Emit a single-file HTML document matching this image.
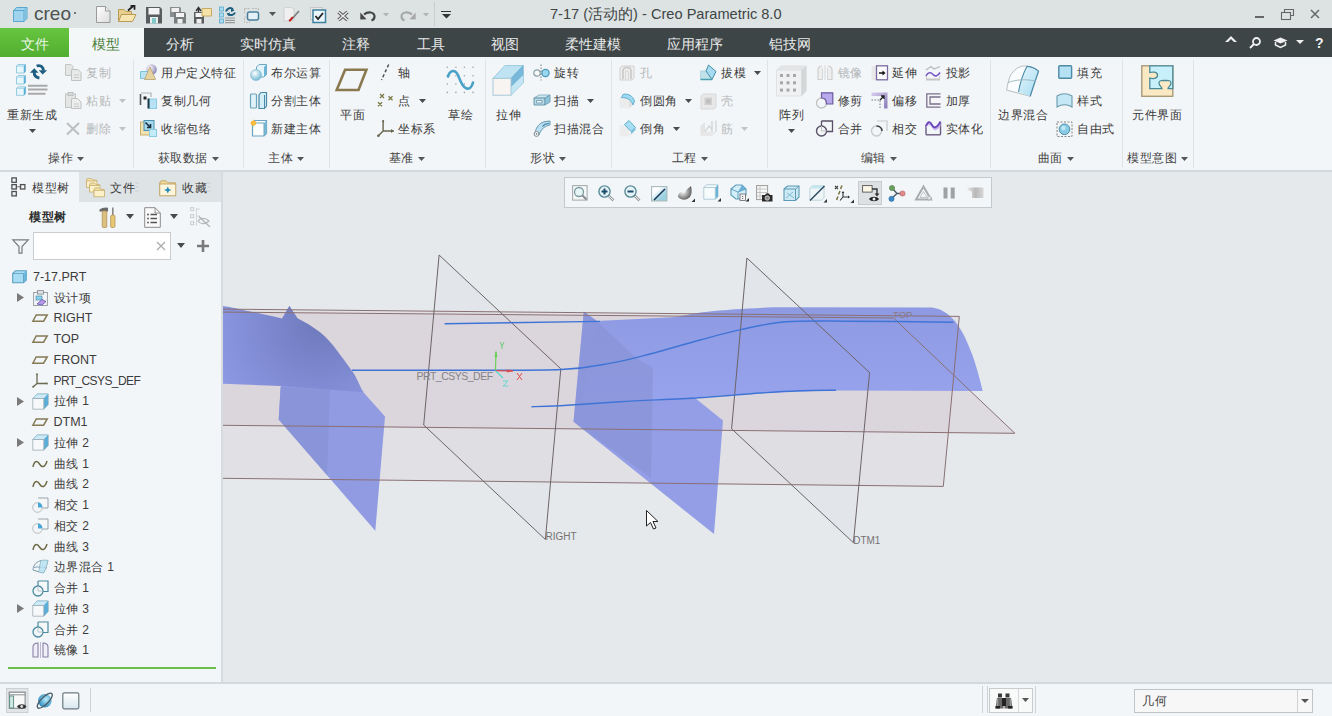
<!DOCTYPE html>
<html><head><meta charset="utf-8"><style>
html,body{margin:0;padding:0;width:1332px;height:716px;overflow:hidden;background:#f3f6f8;}
body{position:relative;font-family:"Liberation Sans", sans-serif;}
.t{position:absolute;white-space:nowrap;}
svg{overflow:visible}
</style></head><body>
<div style="position:absolute;left:0px;top:0px;width:1332px;height:28px;background:#dde3e3"></div>
<svg style="position:absolute;left:12px;top:6px;" width="17" height="17" viewBox="0 0 17 17"><path d="M1.5 4.5 L4.5 1.5 H15 V12.5 L12 15.5 H1.5Z" fill="#9fd4ee" stroke="#5aa6cc" stroke-width="1"/><path d="M1.5 4.5H12V15.5M12 4.5L15 1.5" fill="none" stroke="#5aa6cc" stroke-width="1"/><path d="M12 4.5 L15 1.5 V12.5 L12 15.5Z" fill="#7fc0e0"/></svg>
<div class="t" style="left:34px;top:0.50px;line-height:25px;font-size:19px;color:#4d5252;font-weight:normal;">creo</div>
<div style="position:absolute;left:74px;top:12px;width:2px;height:2px;background:#4d5252;border-radius:1px"></div>
<div class="t" style="left:550px;top:3.70px;line-height:20.6px;font-size:14.6px;color:#404545;font-weight:normal;">7-17 (活动的) - Creo Parametric 8.0</div>
<svg style="position:absolute;left:96px;top:6px;" width="15" height="17" viewBox="0 0 15 17"><defs><linearGradient id="pg" x1="0" y1="0" x2="1" y2="1"><stop offset="0" stop-color="#ffffff"/><stop offset="1" stop-color="#dcdcdc"/></linearGradient></defs><path d="M0.5 0.5H9.5L14 5V16.5H0.5Z" fill="url(#pg)" stroke="#9a9a9a"/><path d="M9.5 0.5V5H14" fill="#eee" stroke="#9a9a9a"/></svg>
<svg style="position:absolute;left:118px;top:5px;" width="19" height="18" viewBox="0 0 19 18"><path d="M0.5 4.5H6L8 6.5H13.5V16.5H0.5Z" fill="#e8cf8e" stroke="#b99a55"/><path d="M0.5 16.5L3.5 9.5H18L14.5 16.5Z" fill="#f8e6b0" stroke="#b99a55"/><path d="M10 5.5L15.5 0.8M12.5 0.8H16.5V4.8" fill="none" stroke="#222" stroke-width="1.8"/></svg>
<svg style="position:absolute;left:145.5px;top:6.5px;" width="16" height="16.5" viewBox="0 0 16 16.5"><path d="M0 0H14L16 2V16.5H0Z" fill="#5a5d60"/><rect x="2.5" y="1" width="11" height="6.5" fill="#f4f4f4"/><rect x="4" y="10" width="8" height="6.5" fill="#e8eeee"/><rect x="6" y="11" width="4" height="5.5" fill="#7fc8c8"/></svg>
<svg style="position:absolute;left:170px;top:6.5px;" width="16" height="16.5" viewBox="0 0 16 16.5"><path d="M0 0H10L11 1V10H0Z" fill="#8a8d90"/><rect x="1.5" y="1" width="7.5" height="4" fill="#f0f0f0"/><path d="M4 5H14.5L16 6.5V16.5H4Z" fill="#7a7d80"/><rect x="6" y="6" width="8" height="4" fill="#f4f4f4"/><rect x="7.5" y="12" width="5" height="4.5" fill="#eef0f0"/></svg>
<svg style="position:absolute;left:193.5px;top:5.5px;" width="18" height="17.5" viewBox="0 0 18 17.5"><path d="M0 6H9L10 7V17.5H0Z" fill="#5a5d60"/><rect x="1.5" y="7" width="7" height="4" fill="#f4f4f4"/><rect x="2.5" y="13" width="5" height="4.5" fill="#eef0f0"/><path d="M8 2.5H17.5V10H8Z" fill="#f6e3a8" stroke="#c6aa66"/><path d="M2 5L4.5 1.5L7 5M4.5 1.5V6" fill="none" stroke="#333" stroke-width="1.4"/></svg>
<svg style="position:absolute;left:219px;top:5.5px;" width="17" height="17.5" viewBox="0 0 17 17.5"><rect x="0.5" y="1" width="4" height="4" fill="#a8dcf0" stroke="#5aa8cc" stroke-width="0.8"/><rect x="0.5" y="7" width="4" height="4" fill="#a8dcf0" stroke="#5aa8cc" stroke-width="0.8"/><rect x="0.5" y="13" width="4" height="4" fill="#a8dcf0" stroke="#5aa8cc" stroke-width="0.8"/><path d="M7 5.5C8 2 12 1 14 3.5M16 6.5C15 9 11 10 9 8" fill="none" stroke="#1f5f80" stroke-width="2"/><path d="M12 1.5L15.5 4.5L12 6Z M11 6.5L7.5 7.5L10 10Z" fill="#1f5f80"/><path d="M6 12H16M6 14.3H16M6 16.6H16" stroke="#9a9a9a" stroke-width="1.2"/></svg>
<svg style="position:absolute;left:244px;top:8px;" width="16" height="15" viewBox="0 0 16 15"><path d="M0.5 0.5H6M8 0.5H14.5M0.5 0.5V5M14.5 0.5V3" fill="none" stroke="#b8b8b8" stroke-width="1" stroke-dasharray="2 1"/><rect x="0.5" y="9" width="5" height="5.5" fill="none" stroke="#c0c0c0" stroke-dasharray="2 1"/><rect x="3.5" y="4" width="11" height="8" rx="2" fill="#e4f2f8" stroke="#4a7f9a" stroke-width="1.5"/></svg>
<svg style="position:absolute;left:268.7px;top:11.8px;" width="7" height="4" viewBox="0 0 7 4"><path d="M0 0H7L3.5 4Z" fill="#555"/></svg>
<svg style="position:absolute;left:283px;top:6.5px;" width="18" height="16.5" viewBox="0 0 18 16.5"><path d="M1 1C4 0 9 0 11 2V14C8 13 3 13 1 15Z" fill="#f0f0f0" stroke="#d0d0d0"/><path d="M16 4L8 13" stroke="#777" stroke-width="1.5"/><path d="M10.5 10.5L7 15L5.5 13.5L9 9.5Z" fill="#c82020"/></svg>
<svg style="position:absolute;left:310px;top:7px;" width="16" height="16" viewBox="0 0 16 16"><rect x="0.5" y="0.5" width="12" height="12" fill="#e8e8e8" stroke="#c8c8c8"/><rect x="3" y="3" width="12.5" height="12.5" fill="#eaf6fb" stroke="#3f7f9f" stroke-width="1.5"/><path d="M5.5 9L8 12L13 6" fill="none" stroke="#222" stroke-width="1.8"/></svg>
<svg style="position:absolute;left:336.5px;top:10.5px;" width="12" height="10" viewBox="0 0 12 10"><path d="M1.5 1L10.5 9M10.5 1L1.5 9" stroke="#555" stroke-width="3.4"/><path d="M1.5 1L10.5 9M10.5 1L1.5 9" stroke="#f2f2f2" stroke-width="1.4"/></svg>
<svg style="position:absolute;left:359.5px;top:10px;" width="16" height="11" viewBox="0 0 16 11"><path d="M4 4.5C8 1 14.5 2 14.5 6.5C14.5 8.5 13 10 11.5 10.5" fill="none" stroke="#454545" stroke-width="2.2"/><path d="M0.3 2.5L0.3 9.5L6.5 9.3Z" fill="#454545"/></svg>
<svg style="position:absolute;left:383.4px;top:12.65px;" width="6" height="3.5" viewBox="0 0 6 3.5"><path d="M0 0H6L3.0 3.5Z" fill="#b0b4b4"/></svg>
<svg style="position:absolute;left:399.5px;top:10px;" width="16" height="11" viewBox="0 0 16 11"><path d="M12 4.5C8 1 1.5 2 1.5 6.5C1.5 8.5 3 10 4.5 10.5" fill="none" stroke="#a8a8a8" stroke-width="2.2"/><path d="M15.7 2.5L15.7 9.5L9.5 9.3Z" fill="#a8a8a8"/></svg>
<svg style="position:absolute;left:423.0px;top:12.65px;" width="6" height="3.5" viewBox="0 0 6 3.5"><path d="M0 0H6L3.0 3.5Z" fill="#b0b4b4"/></svg>
<div style="position:absolute;left:433.5px;top:2px;width:1px;height:24px;background:#c8cccc"></div>
<div style="position:absolute;left:441px;top:10.5px;width:10px;height:1.3px;background:#333"></div>
<svg style="position:absolute;left:441.5px;top:13.5px;" width="9" height="4.6" viewBox="0 0 9 4.6"><path d="M0 0H9L4.5 4.6Z" fill="#333"/></svg>
<div style="position:absolute;left:1255px;top:16px;width:9px;height:2px;background:#666"></div>
<svg style="position:absolute;left:1281px;top:9px;" width="13" height="11" viewBox="0 0 13 11"><path d="M3.5 3.5V0.5H12.5V6.5H9.5" fill="none" stroke="#666" stroke-width="1.1"/><rect x="0.5" y="3.5" width="9" height="7" fill="none" stroke="#666" stroke-width="1.1"/></svg>
<svg style="position:absolute;left:1310px;top:9px;" width="10" height="10" viewBox="0 0 10 10"><path d="M1 1L9 9M9 1L1 9" stroke="#666" stroke-width="1.5"/></svg>
<div style="position:absolute;left:0px;top:28px;width:1332px;height:29px;background:#3e4547"></div>
<div style="position:absolute;left:0px;top:28px;width:69px;height:29px;background:linear-gradient(#66c540,#52ae30)"></div>
<div style="position:absolute;left:69px;top:28px;width:75px;height:29px;background:#f4f7f8"></div>
<div class="t" style="left:21px;top:33.50px;line-height:20px;font-size:14px;color:#ecf7e6;font-weight:normal;">文件</div>
<div class="t" style="left:92px;top:33.50px;line-height:20px;font-size:14px;color:#4a7d3a;font-weight:normal;">模型</div>
<div class="t" style="left:166px;top:33.50px;line-height:20px;font-size:14px;color:#e8eaea;font-weight:normal;">分析</div>
<div class="t" style="left:240px;top:33.50px;line-height:20px;font-size:14px;color:#e8eaea;font-weight:normal;">实时仿真</div>
<div class="t" style="left:342px;top:33.50px;line-height:20px;font-size:14px;color:#e8eaea;font-weight:normal;">注释</div>
<div class="t" style="left:417px;top:33.50px;line-height:20px;font-size:14px;color:#e8eaea;font-weight:normal;">工具</div>
<div class="t" style="left:491px;top:33.50px;line-height:20px;font-size:14px;color:#e8eaea;font-weight:normal;">视图</div>
<div class="t" style="left:565px;top:33.50px;line-height:20px;font-size:14px;color:#e8eaea;font-weight:normal;">柔性建模</div>
<div class="t" style="left:667px;top:33.50px;line-height:20px;font-size:14px;color:#e8eaea;font-weight:normal;">应用程序</div>
<div class="t" style="left:769px;top:33.50px;line-height:20px;font-size:14px;color:#e8eaea;font-weight:normal;">铝技网</div>
<svg style="position:absolute;left:1225px;top:36px;" width="12" height="7" viewBox="0 0 12 7"><path d="M0 6L6 0L12 6L9 6L6 3L3 6Z" fill="#f0f0f0"/></svg>
<svg style="position:absolute;left:1249px;top:37px;" width="13" height="11" viewBox="0 0 13 11"><circle cx="7.5" cy="4.5" r="3.5" fill="none" stroke="#f0f0f0" stroke-width="1.8"/><path d="M5 7L1 11" stroke="#f0f0f0" stroke-width="2"/></svg>
<svg style="position:absolute;left:1273px;top:37px;" width="15" height="11" viewBox="0 0 15 11"><path d="M0.5 3.5L7.5 0.5L14.5 3.5L7.5 6.5Z" fill="#f0f0f0"/><path d="M2.5 5V8L7.5 10.5L12.5 8V5" fill="none" stroke="#f0f0f0" stroke-width="1.5"/></svg>
<svg style="position:absolute;left:1295.5px;top:40.0px;" width="8" height="4" viewBox="0 0 8 4"><path d="M0 0H8L4.0 4Z" fill="#f0f0f0"/></svg>
<div class="t" style="left:1315px;top:33.00px;line-height:20px;font-size:14px;color:#f0f0f0;font-weight:bold;">?</div>
<div style="position:absolute;left:0px;top:57px;width:1332px;height:113px;background:#f3f6f8"></div>
<div style="position:absolute;left:0px;top:170px;width:1332px;height:2px;background:#d3d9dc"></div>
<div style="position:absolute;left:133px;top:60px;width:1px;height:108px;background:#dfe3e6"></div>
<div style="position:absolute;left:243px;top:60px;width:1px;height:108px;background:#dfe3e6"></div>
<div style="position:absolute;left:329px;top:60px;width:1px;height:108px;background:#dfe3e6"></div>
<div style="position:absolute;left:485px;top:60px;width:1px;height:108px;background:#dfe3e6"></div>
<div style="position:absolute;left:611px;top:60px;width:1px;height:108px;background:#dfe3e6"></div>
<div style="position:absolute;left:767px;top:60px;width:1px;height:108px;background:#dfe3e6"></div>
<div style="position:absolute;left:990px;top:60px;width:1px;height:108px;background:#dfe3e6"></div>
<div style="position:absolute;left:1122px;top:60px;width:1px;height:108px;background:#dfe3e6"></div>
<div style="position:absolute;left:1193px;top:60px;width:1px;height:108px;background:#dfe3e6"></div>
<svg style="position:absolute;left:16px;top:64px;" width="32" height="32" viewBox="0 0 32 32"><path d="M0.5 2 L2 0.5 H9.5 V7.5 L8 9 H0.5Z" fill="#e8f7fc" stroke="#8cc6de" stroke-width="0.9"/><path d="M8 2H0.5M8 2V9M8 2L9.5 0.5" stroke="#8cc6de" stroke-width="0.8" fill="none"/><path d="M8 2L9.5 0.5V7.5L8 9Z" fill="#5ab0d8"/><path d="M0.5 13 L2 11.5 H9.5 V18.5 L8 20 H0.5Z" fill="#e8f7fc" stroke="#8cc6de" stroke-width="0.9"/><path d="M8 13H0.5M8 13V20M8 13L9.5 11.5" stroke="#8cc6de" stroke-width="0.8" fill="none"/><path d="M8 13L9.5 11.5V18.5L8 20Z" fill="#5ab0d8"/><path d="M0.5 24.3 L2 22.8 H9.5 V29.8 L8 31.3 H0.5Z" fill="#e8f7fc" stroke="#8cc6de" stroke-width="0.9"/><path d="M8 24.3H0.5M8 24.3V31.3M8 24.3L9.5 22.8" stroke="#8cc6de" stroke-width="0.8" fill="none"/><path d="M8 24.3L9.5 22.8V29.8L8 31.3Z" fill="#5ab0d8"/><path d="M20.6 2C23 1 27 1.5 27.5 6.5" fill="none" stroke="#1c5d80" stroke-width="2.8"/><path d="M22.8 6.3H31.2L26.6 10.5Z" fill="#1c5d80"/><path d="M18.2 8C18 11.5 20 13.5 23.4 14" fill="none" stroke="#1c5d80" stroke-width="2.8"/><path d="M18.3 4.3L13.9 8.8H22.5Z" fill="#1c5d80"/><path d="M12 21.7H31.5M12 25.6H31.5M12 29.8H29.5" stroke="#a9a9a9" stroke-width="2"/></svg>
<svg style="position:absolute;left:65px;top:64px;" width="17" height="17" viewBox="0 0 17 17"><path d="M0.5 0.5H6L8 2.5V11.5H0.5Z" fill="#e4e6e6" stroke="#c4c6c6"/><path d="M6.5 5.5H13L16 8.5V16.5H6.5Z" fill="#e8eaea" stroke="#c0c2c2"/><path d="M9 11H14M9 13.5H14" stroke="#c8c8c8"/></svg>
<svg style="position:absolute;left:65px;top:92px;" width="17" height="17" viewBox="0 0 17 17"><rect x="0.5" y="2" width="10" height="13.5" fill="#e4e6e6" stroke="#c4c6c6"/><rect x="3" y="0.5" width="5" height="3" fill="#d8dada" stroke="#c0c2c2"/><path d="M6.5 6.5H12.5L16 10V16.5H6.5Z" fill="#eceeee" stroke="#c0c2c2"/><path d="M9 12H14M9 14.5H14" stroke="#c8c8c8"/></svg>
<svg style="position:absolute;left:66px;top:121.5px;" width="14" height="13.5" viewBox="0 0 14 13.5"><path d="M1 1L13 12.5M13 1L1 12.5" stroke="#bcbfbf" stroke-width="2"/></svg>
<svg style="position:absolute;left:140px;top:64px;" width="17" height="17" viewBox="0 0 17 17"><defs><radialGradient id="sph1" cx="0.35" cy="0.35" r="0.7"><stop offset="0" stop-color="#ffffff"/><stop offset="1" stop-color="#8a84b8"/></radialGradient></defs><circle cx="11.5" cy="5.5" r="5.3" fill="url(#sph1)"/><path d="M0.5 7.5H8V14.5H0.5Z" fill="#b8e4f4" stroke="#7cc0dc"/><path d="M10 3L15.5 15.5H4.5Z" fill="#e6d4a0" stroke="#b8a070" stroke-width="0.8"/></svg>
<svg style="position:absolute;left:140px;top:92px;" width="17" height="17" viewBox="0 0 17 17"><path d="M0.5 2V13" stroke="#5a5a5a" stroke-width="1.6"/><path d="M1 1H11V5" fill="none" stroke="#b0b0b0" stroke-width="1.2"/><rect x="3.5" y="4.5" width="3" height="3" fill="#222"/><rect x="9" y="7" width="7.5" height="9.5" fill="#b8e2f4" stroke="#8ccae4"/><path d="M8.5 6.5V16.5" stroke="#1a3a4a" stroke-width="2"/></svg>
<svg style="position:absolute;left:140px;top:120px;" width="17" height="17" viewBox="0 0 17 17"><rect x="0.5" y="2" width="12" height="13" fill="#f2e2b0" stroke="#c8b070"/><rect x="4" y="0.5" width="10" height="10" fill="#a8d8ec" stroke="#4a90b0"/><path d="M5.5 2.5L10.5 7.5M10.5 4V7.5H7" stroke="#1a3040" stroke-width="1.6" fill="none"/><rect x="9.5" y="9.5" width="7" height="7" fill="#c4ecf8" stroke="#8ccae4"/></svg>
<svg style="position:absolute;left:250px;top:64px;" width="17" height="17" viewBox="0 0 17 17"><defs><radialGradient id="sph2" cx="0.4" cy="0.35" r="0.7"><stop offset="0" stop-color="#ffffff"/><stop offset="1" stop-color="#6ab4d0"/></radialGradient></defs><path d="M6.5 3L9 0.5H16.5V10.5L14 13H6.5Z" fill="#e4f4fa" stroke="#6aa8c4"/><path d="M14 3L16.5 0.5V10.5L14 13Z" fill="#6ab4d4"/><circle cx="6" cy="11" r="5.5" fill="url(#sph2)" stroke="#7ab8d0" stroke-width="0.6"/></svg>
<svg style="position:absolute;left:250px;top:92px;" width="17" height="17" viewBox="0 0 17 17"><rect x="0.5" y="2" width="6" height="14" rx="1" fill="#e0f2fa" stroke="#6aa4bc" stroke-width="1.2"/><path d="M9 3L11 0.5H16.5V14L14.5 16.5H9Z" fill="#d4eef8" stroke="#4a88a8" stroke-width="1.2"/><path d="M14.5 3V16.5" stroke="#4a88a8"/></svg>
<svg style="position:absolute;left:250px;top:120px;" width="17" height="17" viewBox="0 0 17 17"><path d="M2.5 3L5 0.5H16.5V13.5L14 16H2.5Z" fill="#fbfdfe" stroke="#6aa4c0" stroke-width="1.2"/><path d="M14 3L16.5 0.5V13.5L14 16Z" fill="#7abcd8"/><path d="M2.5 3H14V16" fill="none" stroke="#6aa4c0"/><circle cx="3.5" cy="3" r="2.6" fill="#f8b030"/><path d="M3.5 -0.5V6.5M0 3H7" stroke="#f8c850" stroke-width="0.8"/></svg>
<svg style="position:absolute;left:335px;top:68px;" width="33" height="24" viewBox="0 0 33 24"><path d="M10.1 1.8H31.4L23.5 22H1.7Z" fill="none" stroke="#8a7850" stroke-width="2.6" stroke-linejoin="miter"/></svg>
<svg style="position:absolute;left:380px;top:64px;" width="10" height="17" viewBox="0 0 10 17"><path d="M8.7 0.5L1.5 16" stroke="#505050" stroke-width="1.5" stroke-dasharray="3.2 2.2"/></svg>
<svg style="position:absolute;left:377px;top:93px;" width="17" height="14" viewBox="0 0 17 14"><path d="M3 1L7 5M7 1L3 5M11.5 3.2L15.5 7.2M15.5 3.2L11.5 7.2M1 9.3L5 13.3M5 9.3L1 13.3" stroke="#7a7a48" stroke-width="1.3"/></svg>
<svg style="position:absolute;left:377px;top:120px;" width="18" height="18" viewBox="0 0 18 18"><path d="M6.1 1V11H16.8M6.1 11L1.1 16" fill="none" stroke="#67674f" stroke-width="1.4"/><path d="M14 9L17 11L14 13Z" fill="#67674f"/><circle cx="6.1" cy="1.2" r="1.1" fill="#67674f"/><circle cx="1.4" cy="15.8" r="1.3" fill="#67674f"/></svg>
<svg style="position:absolute;left:447px;top:67px;" width="27" height="26" viewBox="0 0 27 26"><circle cx="0.3" cy="0.3" r="0.8" fill="#a0a4a8"/><circle cx="0.3" cy="8.7" r="0.8" fill="#a0a4a8"/><circle cx="0.3" cy="17.0" r="0.8" fill="#a0a4a8"/><circle cx="0.3" cy="25.4" r="0.8" fill="#a0a4a8"/><circle cx="8.9" cy="0.3" r="0.8" fill="#a0a4a8"/><circle cx="8.9" cy="8.7" r="0.8" fill="#a0a4a8"/><circle cx="8.9" cy="17.0" r="0.8" fill="#a0a4a8"/><circle cx="8.9" cy="25.4" r="0.8" fill="#a0a4a8"/><circle cx="17.4" cy="0.3" r="0.8" fill="#a0a4a8"/><circle cx="17.4" cy="8.7" r="0.8" fill="#a0a4a8"/><circle cx="17.4" cy="17.0" r="0.8" fill="#a0a4a8"/><circle cx="17.4" cy="25.4" r="0.8" fill="#a0a4a8"/><circle cx="26.0" cy="0.3" r="0.8" fill="#a0a4a8"/><circle cx="26.0" cy="8.7" r="0.8" fill="#a0a4a8"/><circle cx="26.0" cy="17.0" r="0.8" fill="#a0a4a8"/><circle cx="26.0" cy="25.4" r="0.8" fill="#a0a4a8"/><path d="M1 9.5C3 3 8 2 11 8C13 13 15 20 19.5 21.5C23 22.5 25 19 26 15.5" fill="none" stroke="#48a2c8" stroke-width="2.6" stroke-linecap="round"/></svg>
<svg style="position:absolute;left:492px;top:65px;" width="33" height="32" viewBox="0 0 33 32"><path d="M1 13.4L12.8 0.6H31.2V17.9L19 30.2H1Z" fill="none"/><path d="M1 13.4L12.8 0.6H31.2L19 13.4Z" fill="#bfe3f3" stroke="#8cc4dc" stroke-width="0.8"/><path d="M19 13.4L31.2 0.6V17.9L19 30.2Z" fill="#78b8d8" stroke="#6aaed0" stroke-width="0.8"/><path d="M19 22L31.2 10V17.9L19 30.2Z" fill="#c4e6f4"/><rect x="1" y="13.4" width="18" height="16.8" fill="#f8f4f2" stroke="#a8c8d8" stroke-width="1"/></svg>
<svg style="position:absolute;left:533px;top:64px;" width="17" height="17" viewBox="0 0 17 17"><circle cx="4" cy="9" r="3.2" fill="#fafafa" stroke="#8aa0aa" stroke-width="1.2"/><circle cx="12.5" cy="9" r="3.6" fill="#9ad8f0" stroke="#4a98b8" stroke-width="1.2"/><path d="M8 0.5V16.5" stroke="#6a7a80" stroke-width="1" stroke-dasharray="1.5 1.5"/></svg>
<svg style="position:absolute;left:533px;top:94px;" width="18" height="13" viewBox="0 0 18 13"><path d="M1 4L6 1H17L12 4Z" fill="#cfe8f2" stroke="#7aa8bc" stroke-width="0.8"/><path d="M1 4H12V11H1Z" fill="#b8d8e4" stroke="#6a98ac" stroke-width="1"/><path d="M12 4L17 1V8L12 11Z" fill="#8cc4dc" stroke="#6a98ac" stroke-width="0.8"/><path d="M3.5 6.5H9V9H3.5Z" fill="#e8f4f8" stroke="#6a98ac" stroke-width="0.8"/></svg>
<svg style="position:absolute;left:533px;top:119.5px;" width="18" height="17" viewBox="0 0 18 17"><path d="M2 13C3 7 7 2 13 1.5L17 1V5C12 6 8 9 6 15Z" fill="#b8e0f0" stroke="#6a98b0" stroke-width="1"/><path d="M9.5 6.5C11 4.5 13.5 3.5 16 3.5" fill="none" stroke="#4a80a0" stroke-width="1.2"/><circle cx="3.5" cy="14" r="2.4" fill="#fff" stroke="#7a8a90" stroke-width="1"/><circle cx="3.5" cy="14" r="0.8" fill="#555"/></svg>
<svg style="position:absolute;left:619px;top:64.5px;" width="17" height="16" viewBox="0 0 17 16"><path d="M1 3L3 1H15V13L13 15H1Z" fill="#eeeeee" stroke="#d0d0d0"/><path d="M4 14V6C4 3 6 2.5 8 2.5C10 2.5 12 3 12 6V14" fill="none" stroke="#c8c8c8" stroke-width="1.6"/><path d="M6.5 14V7C6.5 5.5 9.5 5.5 9.5 7V14" fill="none" stroke="#d6d6d6" stroke-width="1"/></svg>
<svg style="position:absolute;left:619px;top:92px;" width="18" height="17" viewBox="0 0 18 17"><path d="M0.5 5H10V16.5H0.5Z" fill="#ececec"/><path d="M10 5V16.5L14 13" fill="#e0e0e0"/><path d="M4 2.5C9 1 14 4 15.5 9L14 13C12.5 8 8.5 5.5 2.5 5.5Z" fill="#9edaf2" stroke="#58a8c8" stroke-width="0.9"/></svg>
<svg style="position:absolute;left:619px;top:120px;" width="18" height="16.5" viewBox="0 0 18 16.5"><path d="M0.5 5H10V16.5H0.5Z" fill="#ececec"/><path d="M10 16.5L15 12.5V8" fill="#e2e2e2"/><path d="M5.5 4.5L10 0.5L16.5 7.5L12 11.5Z" fill="#a8def4" stroke="#58a8c8" stroke-width="0.9"/><path d="M12 11.5L16.5 7.5V10L12 14Z" fill="#7ac0dc"/></svg>
<svg style="position:absolute;left:700px;top:64px;" width="17" height="16" viewBox="0 0 17 16"><path d="M0.5 7H6L12 15.5H0.5Z" fill="#bfe2ea" stroke="#9ac8d4" stroke-width="0.6"/><path d="M6 7L8.5 1L16 7.5L12 15.5Z" fill="#a6daf0" stroke="#4a90a8" stroke-width="1"/><path d="M0.5 15.5H12" stroke="#4aa0b0" stroke-width="1.5"/></svg>
<svg style="position:absolute;left:700px;top:92.5px;" width="17" height="16.5" viewBox="0 0 17 16.5"><path d="M1 3L3 1H16V14L14 16H1Z" fill="#e8e8e8" stroke="#d8d8d8"/><rect x="4.5" y="4.5" width="7.5" height="7.5" fill="#d0d0d0"/><rect x="6" y="6" width="4.5" height="4.5" fill="#c0c0c0"/></svg>
<svg style="position:absolute;left:700px;top:120px;" width="17" height="16.5" viewBox="0 0 17 16.5"><path d="M0.5 6L5 2V12L0.5 16Z" fill="#e4e4e4"/><path d="M5 12H16.5L12 16H0.5Z" fill="#e8e8e8"/><path d="M12 1V12M16 0.5V12" stroke="#d4d4d4" stroke-width="1.4"/><path d="M5 12L9 6L12 9" fill="none" stroke="#d0d0d0" stroke-width="1.2"/></svg>
<svg style="position:absolute;left:776px;top:65px;" width="31" height="31.5" viewBox="0 0 31 31.5"><path d="M0.5 5L5 0.5H30.5V26L26 31H0.5Z" fill="#e8eaeb"/><path d="M0.5 5H25.5V31H0.5Z" fill="#f0f1f2" stroke="#dcdedf" stroke-width="0.8"/><path d="M25.5 5L30.5 0.5V26L25.5 31Z" fill="#d4d6d8"/><path d="M0.5 5L5 0.5H30.5L25.5 5Z" fill="#e2e4e5"/><rect x="4.0" y="9.0" width="3" height="3" fill="#a4a8aa"/><rect x="4.0" y="16.3" width="3" height="3" fill="#a4a8aa"/><rect x="4.0" y="23.6" width="3" height="3" fill="#a4a8aa"/><rect x="10.5" y="9.0" width="3" height="3" fill="#a4a8aa"/><rect x="10.5" y="16.3" width="3" height="3" fill="#a4a8aa"/><rect x="10.5" y="23.6" width="3" height="3" fill="#a4a8aa"/><rect x="17.0" y="9.0" width="3" height="3" fill="#a4a8aa"/><rect x="17.0" y="16.3" width="3" height="3" fill="#a4a8aa"/><rect x="17.0" y="23.6" width="3" height="3" fill="#a4a8aa"/></svg>
<svg style="position:absolute;left:817px;top:64.5px;" width="16" height="15" viewBox="0 0 16 15"><path d="M5 1C2 1 1 3 1 5V14.5H5.5" fill="#eeeeee" stroke="#cfcfcf" stroke-width="1.2"/><path d="M11 1C14 1 15 3 15 5V14.5H10.5" fill="#eeeeee" stroke="#cfcfcf" stroke-width="1.2"/><path d="M8 0V15" stroke="#d8d8d8"/><path d="M5.5 3V14.5M10.5 3V14.5" stroke="#d8d8d8"/></svg>
<svg style="position:absolute;left:816px;top:91.5px;" width="17.5" height="17" viewBox="0 0 17.5 17"><circle cx="5.5" cy="11" r="5" fill="none" stroke="#c4c4c4" stroke-width="1.4"/><path d="M5.5 0.8H16.8V12H10.5C10.5 8 9 6 5.5 6Z" fill="#b8a8ec" stroke="#6a5aa0" stroke-width="1.2"/></svg>
<svg style="position:absolute;left:816px;top:120px;" width="17.5" height="17" viewBox="0 0 17.5 17"><path d="M5.5 1H16.5V11.5H10.5" fill="none" stroke="#5a5068" stroke-width="1.3"/><path d="M5.5 1V6" stroke="#5a5068" stroke-width="1.3"/><circle cx="5.5" cy="11" r="5" fill="none" stroke="#5a5068" stroke-width="1.4"/><path d="M5.5 6V11H10.5" fill="none" stroke="#c0c0c0" stroke-width="1"/></svg>
<svg style="position:absolute;left:871px;top:64.5px;" width="17" height="15.5" viewBox="0 0 17 15.5"><rect x="0.5" y="1" width="5" height="14" fill="#e8e8e8"/><rect x="5.5" y="0.8" width="11" height="14" fill="#fafafa" stroke="#7a6aa0" stroke-width="1.3"/><path d="M8 8H12.5" stroke="#111" stroke-width="1.5"/><path d="M11.5 5.5L14.5 8L11.5 10.5Z" fill="#111"/></svg>
<svg style="position:absolute;left:871px;top:92px;" width="17" height="17" viewBox="0 0 17 17"><defs><linearGradient id="ofg" x1="0" y1="0" x2="1" y2="1"><stop offset="0" stop-color="#d8d0f0"/><stop offset="1" stop-color="#8a7ab8"/></linearGradient></defs><path d="M0.5 0.5H16.5V16.5H13V4H0.5Z" fill="url(#ofg)"/><path d="M0.5 8H9V16.5" fill="none" stroke="#777" stroke-width="1" stroke-dasharray="1.5 1.5"/><path d="M9 8L13 4M10 4H13V7" fill="none" stroke="#222" stroke-width="1.3"/></svg>
<svg style="position:absolute;left:871px;top:120px;" width="17" height="17" viewBox="0 0 17 17"><path d="M6 1H16V11" fill="none" stroke="#c8c8c8" stroke-width="1.2"/><circle cx="5.5" cy="11" r="5" fill="none" stroke="#c8c8c8" stroke-width="1.3"/><path d="M5.5 6C9 6 11 8.5 11 11" fill="none" stroke="#3a3a3a" stroke-width="1.6"/></svg>
<svg style="position:absolute;left:924.5px;top:65px;" width="16" height="15.5" viewBox="0 0 16 15.5"><path d="M1 5L6 1.5L9 4L15 1.5" fill="none" stroke="#b8b8b8" stroke-width="1.2"/><path d="M1 11C3 7 6 7 8 9.5C10 12 13 11 15 7.5" fill="none" stroke="#7a58c8" stroke-width="1.6"/><path d="M1 14.5H15" stroke="#c4c4c4" stroke-width="2"/><path d="M2 15L1 11M14 15L15 11" stroke="#c8c8c8"/></svg>
<svg style="position:absolute;left:925.5px;top:93px;" width="15" height="15" viewBox="0 0 15 15"><path d="M14.5 0.8H0.8V14.2H14.5M14.5 4H4V11H14.5" fill="#f6f6f8" stroke="#7a708a" stroke-width="1.3"/></svg>
<svg style="position:absolute;left:925px;top:120px;" width="17" height="15.5" viewBox="0 0 17 15.5"><path d="M1 14.8V5M15.5 14.8V2" stroke="#6a5a80" stroke-width="1.4"/><path d="M1 14.8H15.5" stroke="#6a5a80" stroke-width="1.4"/><path d="M1 5C3 1 5 1 7 4.5C9 8 11 8 15.5 1.5V6C11 12 9 11 7 7.5C5 4 3 4 1 8Z" fill="#c8b0f0"/><path d="M1 6C3 1 5 1 7 5C9 9 12 8 15.5 1.5" fill="none" stroke="#6a48b8" stroke-width="1.8"/></svg>
<svg style="position:absolute;left:1006px;top:64.5px;" width="34" height="32" viewBox="0 0 34 32"><defs><linearGradient id="bbg" x1="0" y1="0" x2="1" y2="1"><stop offset="0" stop-color="#e8f7fc"/><stop offset="1" stop-color="#a4daf0"/></linearGradient></defs><path d="M4.6 10C8 5 12 2 16.3 1.1C22 0.5 28 2 32.5 6.1C30 14 27 22 24.2 31.3C16 29 8 27 0.6 25.1C1.5 20 2.5 15 4.6 10Z" fill="#fbfcfd" stroke="#b0b6b8" stroke-width="0.9"/><path d="M21 1.3C25 1.5 29 3 32.5 6.1C30 14 27 22 24.2 31.3C20 30 16 28 12.5 27C14 18 17 9 21 1.3Z" fill="url(#bbg)"/><path d="M21 1.3C25 1.5 29 3 32.5 6.1C30 14 27 22 24.2 31.3" fill="none" stroke="#4a8aa8" stroke-width="1.2"/><path d="M21 1.3C17 9 14 18 12.5 27" fill="none" stroke="#4a8aa8" stroke-width="1.1"/><path d="M2.3 17.5C10 14.5 20 14 29.8 16" fill="none" stroke="#9ab4c0" stroke-width="0.9"/></svg>
<svg style="position:absolute;left:1057.5px;top:65px;" width="14.5" height="14" viewBox="0 0 14.5 14"><rect x="0.8" y="0.8" width="12.8" height="12.4" rx="1" fill="#b4e2f4" stroke="#4a8aa4" stroke-width="1.4"/></svg>
<svg style="position:absolute;left:1056px;top:92.5px;" width="17" height="15" viewBox="0 0 17 15"><path d="M1 3C6 0 11 0 16 3V14C11 11 6 11 1 14Z" fill="#c4e8f6" stroke="#6a9aac" stroke-width="1.1"/></svg>
<svg style="position:absolute;left:1056px;top:120.5px;" width="17" height="16.5" viewBox="0 0 17 16.5"><rect x="1" y="1" width="15" height="14.5" fill="#f2f6f8" stroke="#777" stroke-width="0.9" stroke-dasharray="2 1.5"/><circle cx="8.5" cy="8.3" r="5.3" fill="#8acce4" stroke="#4a8aa8" stroke-width="1"/><circle cx="7.5" cy="7" r="2.2" fill="#c0e8f6"/></svg>
<svg style="position:absolute;left:1140.5px;top:64.5px;" width="33" height="32" viewBox="0 0 33 32"><rect x="0.8" y="0.8" width="31" height="30.5" fill="#fbe9c4" stroke="#a89a78" stroke-width="1.4"/><path d="M8.8 0.8H31.8V23.7H27C27 22 30 21 30 18C30 15 27 15.5 24 15.5C21 15.5 18 15 18 18C18 21 21 22 21 23.7H8.8V13.1C11 13.8 16.5 14 16.5 10.3C16.5 6.5 11 6.8 8.8 7.5Z" fill="#c8f0fa" stroke="#4a8a98" stroke-width="1.3"/></svg>
<div class="t" style="left:7px;top:105.70px;line-height:18px;font-size:12px;color:#3c3c3c;font-weight:normal;letter-spacing:0.5px;">重新生成</div>
<svg style="position:absolute;left:28.5px;top:129.0px;" width="7" height="4" viewBox="0 0 7 4"><path d="M0 0H7L3.5 4Z" fill="#4a4a4a"/></svg>
<div class="t" style="left:86px;top:63.80px;line-height:18px;font-size:12px;color:#b4b8ba;font-weight:normal;letter-spacing:0.5px;">复制</div>
<div class="t" style="left:86px;top:92.00px;line-height:18px;font-size:12px;color:#b4b8ba;font-weight:normal;letter-spacing:0.5px;">粘贴</div>
<svg style="position:absolute;left:118.5px;top:99.0px;" width="7" height="4" viewBox="0 0 7 4"><path d="M0 0H7L3.5 4Z" fill="#c0c4c6"/></svg>
<div class="t" style="left:86px;top:119.60px;line-height:18px;font-size:12px;color:#b4b8ba;font-weight:normal;letter-spacing:0.5px;">删除</div>
<svg style="position:absolute;left:118.5px;top:126.6px;" width="7" height="4" viewBox="0 0 7 4"><path d="M0 0H7L3.5 4Z" fill="#c0c4c6"/></svg>
<div class="t" style="left:161px;top:63.80px;line-height:18px;font-size:12px;color:#3c3c3c;font-weight:normal;letter-spacing:0.5px;">用户定义特征</div>
<div class="t" style="left:161px;top:92.00px;line-height:18px;font-size:12px;color:#3c3c3c;font-weight:normal;letter-spacing:0.5px;">复制几何</div>
<div class="t" style="left:161px;top:119.60px;line-height:18px;font-size:12px;color:#3c3c3c;font-weight:normal;letter-spacing:0.5px;">收缩包络</div>
<div class="t" style="left:271px;top:63.80px;line-height:18px;font-size:12px;color:#3c3c3c;font-weight:normal;letter-spacing:0.5px;">布尔运算</div>
<div class="t" style="left:271px;top:92.00px;line-height:18px;font-size:12px;color:#3c3c3c;font-weight:normal;letter-spacing:0.5px;">分割主体</div>
<div class="t" style="left:271px;top:119.60px;line-height:18px;font-size:12px;color:#3c3c3c;font-weight:normal;letter-spacing:0.5px;">新建主体</div>
<div class="t" style="left:340px;top:105.70px;line-height:18px;font-size:12px;color:#3c3c3c;font-weight:normal;letter-spacing:0.5px;">平面</div>
<div class="t" style="left:398px;top:63.80px;line-height:18px;font-size:12px;color:#3c3c3c;font-weight:normal;letter-spacing:0.5px;">轴</div>
<div class="t" style="left:398px;top:92.00px;line-height:18px;font-size:12px;color:#3c3c3c;font-weight:normal;letter-spacing:0.5px;">点</div>
<svg style="position:absolute;left:418.5px;top:99.0px;" width="7" height="4" viewBox="0 0 7 4"><path d="M0 0H7L3.5 4Z" fill="#4a4a4a"/></svg>
<div class="t" style="left:398px;top:119.60px;line-height:18px;font-size:12px;color:#3c3c3c;font-weight:normal;letter-spacing:0.5px;">坐标系</div>
<div class="t" style="left:448px;top:105.70px;line-height:18px;font-size:12px;color:#3c3c3c;font-weight:normal;letter-spacing:0.5px;">草绘</div>
<div class="t" style="left:496px;top:105.70px;line-height:18px;font-size:12px;color:#3c3c3c;font-weight:normal;letter-spacing:0.5px;">拉伸</div>
<div class="t" style="left:554px;top:63.80px;line-height:18px;font-size:12px;color:#3c3c3c;font-weight:normal;letter-spacing:0.5px;">旋转</div>
<div class="t" style="left:554px;top:92.00px;line-height:18px;font-size:12px;color:#3c3c3c;font-weight:normal;letter-spacing:0.5px;">扫描</div>
<svg style="position:absolute;left:586.5px;top:99.0px;" width="7" height="4" viewBox="0 0 7 4"><path d="M0 0H7L3.5 4Z" fill="#4a4a4a"/></svg>
<div class="t" style="left:554px;top:119.60px;line-height:18px;font-size:12px;color:#3c3c3c;font-weight:normal;letter-spacing:0.5px;">扫描混合</div>
<div class="t" style="left:640px;top:63.80px;line-height:18px;font-size:12px;color:#b4b8ba;font-weight:normal;letter-spacing:0.5px;">孔</div>
<div class="t" style="left:640px;top:92.00px;line-height:18px;font-size:12px;color:#3c3c3c;font-weight:normal;letter-spacing:0.5px;">倒圆角</div>
<svg style="position:absolute;left:684.5px;top:99.0px;" width="7" height="4" viewBox="0 0 7 4"><path d="M0 0H7L3.5 4Z" fill="#4a4a4a"/></svg>
<div class="t" style="left:640px;top:119.60px;line-height:18px;font-size:12px;color:#3c3c3c;font-weight:normal;letter-spacing:0.5px;">倒角</div>
<svg style="position:absolute;left:672.5px;top:126.6px;" width="7" height="4" viewBox="0 0 7 4"><path d="M0 0H7L3.5 4Z" fill="#4a4a4a"/></svg>
<div class="t" style="left:721px;top:63.80px;line-height:18px;font-size:12px;color:#3c3c3c;font-weight:normal;letter-spacing:0.5px;">拔模</div>
<svg style="position:absolute;left:753.5px;top:70.8px;" width="7" height="4" viewBox="0 0 7 4"><path d="M0 0H7L3.5 4Z" fill="#4a4a4a"/></svg>
<div class="t" style="left:721px;top:92.00px;line-height:18px;font-size:12px;color:#b4b8ba;font-weight:normal;letter-spacing:0.5px;">壳</div>
<div class="t" style="left:721px;top:119.60px;line-height:18px;font-size:12px;color:#b4b8ba;font-weight:normal;letter-spacing:0.5px;">筋</div>
<svg style="position:absolute;left:741.0px;top:126.6px;" width="7" height="4" viewBox="0 0 7 4"><path d="M0 0H7L3.5 4Z" fill="#c0c4c6"/></svg>
<div class="t" style="left:779px;top:105.70px;line-height:18px;font-size:12px;color:#3c3c3c;font-weight:normal;letter-spacing:0.5px;">阵列</div>
<svg style="position:absolute;left:788.0px;top:129.0px;" width="7" height="4" viewBox="0 0 7 4"><path d="M0 0H7L3.5 4Z" fill="#4a4a4a"/></svg>
<div class="t" style="left:837.5px;top:63.80px;line-height:18px;font-size:12px;color:#b4b8ba;font-weight:normal;letter-spacing:0.5px;">镜像</div>
<div class="t" style="left:837.5px;top:92.00px;line-height:18px;font-size:12px;color:#3c3c3c;font-weight:normal;letter-spacing:0.5px;">修剪</div>
<div class="t" style="left:837.5px;top:119.60px;line-height:18px;font-size:12px;color:#3c3c3c;font-weight:normal;letter-spacing:0.5px;">合并</div>
<div class="t" style="left:892px;top:63.80px;line-height:18px;font-size:12px;color:#3c3c3c;font-weight:normal;letter-spacing:0.5px;">延伸</div>
<div class="t" style="left:892px;top:92.00px;line-height:18px;font-size:12px;color:#3c3c3c;font-weight:normal;letter-spacing:0.5px;">偏移</div>
<div class="t" style="left:892px;top:119.60px;line-height:18px;font-size:12px;color:#3c3c3c;font-weight:normal;letter-spacing:0.5px;">相交</div>
<div class="t" style="left:945.5px;top:63.80px;line-height:18px;font-size:12px;color:#3c3c3c;font-weight:normal;letter-spacing:0.5px;">投影</div>
<div class="t" style="left:945.5px;top:92.00px;line-height:18px;font-size:12px;color:#3c3c3c;font-weight:normal;letter-spacing:0.5px;">加厚</div>
<div class="t" style="left:945.5px;top:119.60px;line-height:18px;font-size:12px;color:#3c3c3c;font-weight:normal;letter-spacing:0.5px;">实体化</div>
<div class="t" style="left:998px;top:105.70px;line-height:18px;font-size:12px;color:#3c3c3c;font-weight:normal;letter-spacing:0.5px;">边界混合</div>
<div class="t" style="left:1077px;top:63.80px;line-height:18px;font-size:12px;color:#3c3c3c;font-weight:normal;letter-spacing:0.5px;">填充</div>
<div class="t" style="left:1077px;top:92.00px;line-height:18px;font-size:12px;color:#3c3c3c;font-weight:normal;letter-spacing:0.5px;">样式</div>
<div class="t" style="left:1077px;top:119.60px;line-height:18px;font-size:12px;color:#3c3c3c;font-weight:normal;letter-spacing:0.5px;">自由式</div>
<div class="t" style="left:1132px;top:105.70px;line-height:18px;font-size:12px;color:#3c3c3c;font-weight:normal;letter-spacing:0.5px;">元件界面</div>
<div class="t" style="left:48px;top:149.20px;line-height:18px;font-size:12px;color:#454545;font-weight:normal;letter-spacing:0.5px;">操作</div>
<svg style="position:absolute;left:77.2px;top:156.5px;" width="7" height="4" viewBox="0 0 7 4"><path d="M0 0H7L3.5 4Z" fill="#555"/></svg>
<div class="t" style="left:157.7px;top:149.20px;line-height:18px;font-size:12px;color:#454545;font-weight:normal;letter-spacing:0.5px;">获取数据</div>
<svg style="position:absolute;left:212.0px;top:156.5px;" width="7" height="4" viewBox="0 0 7 4"><path d="M0 0H7L3.5 4Z" fill="#555"/></svg>
<div class="t" style="left:268px;top:149.20px;line-height:18px;font-size:12px;color:#454545;font-weight:normal;letter-spacing:0.5px;">主体</div>
<svg style="position:absolute;left:296.7px;top:156.5px;" width="7" height="4" viewBox="0 0 7 4"><path d="M0 0H7L3.5 4Z" fill="#555"/></svg>
<div class="t" style="left:388.5px;top:149.20px;line-height:18px;font-size:12px;color:#454545;font-weight:normal;letter-spacing:0.5px;">基准</div>
<svg style="position:absolute;left:417.5px;top:156.5px;" width="7" height="4" viewBox="0 0 7 4"><path d="M0 0H7L3.5 4Z" fill="#555"/></svg>
<div class="t" style="left:530px;top:149.20px;line-height:18px;font-size:12px;color:#454545;font-weight:normal;letter-spacing:0.5px;">形状</div>
<svg style="position:absolute;left:558.5px;top:156.5px;" width="7" height="4" viewBox="0 0 7 4"><path d="M0 0H7L3.5 4Z" fill="#555"/></svg>
<div class="t" style="left:671.7px;top:149.20px;line-height:18px;font-size:12px;color:#454545;font-weight:normal;letter-spacing:0.5px;">工程</div>
<svg style="position:absolute;left:700.5px;top:156.5px;" width="7" height="4" viewBox="0 0 7 4"><path d="M0 0H7L3.5 4Z" fill="#555"/></svg>
<div class="t" style="left:860.5px;top:149.20px;line-height:18px;font-size:12px;color:#454545;font-weight:normal;letter-spacing:0.5px;">编辑</div>
<svg style="position:absolute;left:890.2px;top:156.5px;" width="7" height="4" viewBox="0 0 7 4"><path d="M0 0H7L3.5 4Z" fill="#555"/></svg>
<div class="t" style="left:1037.8px;top:149.20px;line-height:18px;font-size:12px;color:#454545;font-weight:normal;letter-spacing:0.5px;">曲面</div>
<svg style="position:absolute;left:1066.8px;top:156.5px;" width="7" height="4" viewBox="0 0 7 4"><path d="M0 0H7L3.5 4Z" fill="#555"/></svg>
<div class="t" style="left:1127.2px;top:149.20px;line-height:18px;font-size:12px;color:#454545;font-weight:normal;letter-spacing:0.5px;">模型意图</div>
<svg style="position:absolute;left:1180.5px;top:156.5px;" width="7" height="4" viewBox="0 0 7 4"><path d="M0 0H7L3.5 4Z" fill="#555"/></svg>
<div style="position:absolute;left:0px;top:172px;width:221px;height:511px;background:#f3f6f8"></div>
<div style="position:absolute;left:79px;top:172px;width:143px;height:30px;background:#dee3e5"></div>
<div style="position:absolute;left:221px;top:172px;width:2px;height:511px;background:#d5dbde"></div>
<div class="t" style="left:32px;top:178.60px;line-height:18px;font-size:12px;color:#3c3c3c;font-weight:normal;letter-spacing:0.5px;">模型树</div>
<div class="t" style="left:110px;top:178.60px;line-height:18px;font-size:12px;color:#3c3c3c;font-weight:normal;letter-spacing:0.5px;">文件</div>
<div class="t" style="left:182px;top:178.60px;line-height:18px;font-size:12px;color:#3c3c3c;font-weight:normal;letter-spacing:0.5px;">收藏</div>
<div class="t" style="left:29px;top:207.90px;line-height:18px;font-size:12px;color:#2e2e2e;font-weight:bold;letter-spacing:0.5px;">模型树</div>
<svg style="position:absolute;left:126.0px;top:214.3px;" width="8" height="5" viewBox="0 0 8 5"><path d="M0 0H8L4.0 5Z" fill="#4a4a4a"/></svg>
<svg style="position:absolute;left:170.0px;top:214.3px;" width="8" height="5" viewBox="0 0 8 5"><path d="M0 0H8L4.0 5Z" fill="#4a4a4a"/></svg>
<div style="position:absolute;left:33px;top:232px;width:138px;height:28px;background:#fff;border:1px solid #c9cdcf;box-sizing:border-box"></div>
<svg style="position:absolute;left:156px;top:241px;" width="10" height="10" viewBox="0 0 10 10"><path d="M1 1L9 9M9 1L1 9" stroke="#aaa" stroke-width="1.2"/></svg>
<svg style="position:absolute;left:177.0px;top:243.3px;" width="8" height="5" viewBox="0 0 8 5"><path d="M0 0H8L4.0 5Z" fill="#4a4a4a"/></svg>
<svg style="position:absolute;left:197px;top:240px;" width="12" height="12" viewBox="0 0 12 12"><path d="M6 0V12M0 6H12" stroke="#7a7a7a" stroke-width="2.6"/></svg>
<div style="position:absolute;left:8px;top:667px;width:208px;height:2px;background:#6cbf4a"></div>
<div class="t" style="left:33px;top:267.55px;line-height:18.5px;font-size:12.5px;color:#3c3c3c;font-weight:normal;">7-17.PRT</div>
<svg style="position:absolute;left:11.5px;top:270.3px;" width="15" height="13.5" viewBox="0 0 15 13.5"><path d="M0.7 3.5L3.5 0.7H14.3V10L11.5 12.8H0.7Z" fill="#a8dcf2" stroke="#5aa0c0" stroke-width="1.1"/><path d="M11.5 3.5L14.3 0.7V10L11.5 12.8Z" fill="#6ab8dc"/><path d="M0.7 3.5H11.5V12.8" fill="none" stroke="#5aa0c0" stroke-width="0.8"/></svg>
<div class="t" style="left:53.5px;top:288.55px;line-height:18px;font-size:12px;color:#3c3c3c;font-weight:normal;letter-spacing:0.5px;">设计项</div>
<svg style="position:absolute;left:33px;top:289.55px;" width="15" height="16" viewBox="0 0 15 16"><rect x="0.6" y="2.5" width="13.8" height="13" fill="#f4f6f8" stroke="#9aa0a6" stroke-width="1"/><rect x="4.5" y="0.6" width="6" height="3.5" fill="#dfe3e6" stroke="#8a9096" stroke-width="0.9"/><rect x="3" y="6" width="6" height="4" fill="#8ad0ec" stroke="#4a90b0" stroke-width="0.7"/><path d="M4 14L9 9.5L13 11.5L9 15Z" fill="#b49ae8" stroke="#6a50b0" stroke-width="0.8"/></svg>
<svg style="position:absolute;left:17px;top:293.05px;" width="7" height="9" viewBox="0 0 7 9"><path d="M0 0L7 4.5L0 9Z" fill="#7a7a7a"/></svg>
<div class="t" style="left:53.5px;top:309.05px;line-height:18.5px;font-size:12.5px;color:#3c3c3c;font-weight:normal;">RIGHT</div>
<svg style="position:absolute;left:31.5px;top:314.3px;" width="16" height="8" viewBox="0 0 16 8"><path d="M4.2 0.9H15.2L11.6 7.2H0.9Z" fill="none" stroke="#857a55" stroke-width="1.5"/></svg>
<div class="t" style="left:53.5px;top:329.80px;line-height:18.5px;font-size:12.5px;color:#3c3c3c;font-weight:normal;">TOP</div>
<svg style="position:absolute;left:31.5px;top:335.05px;" width="16" height="8" viewBox="0 0 16 8"><path d="M4.2 0.9H15.2L11.6 7.2H0.9Z" fill="none" stroke="#857a55" stroke-width="1.5"/></svg>
<div class="t" style="left:53.5px;top:350.55px;line-height:18.5px;font-size:12.5px;color:#3c3c3c;font-weight:normal;">FRONT</div>
<svg style="position:absolute;left:31.5px;top:355.8px;" width="16" height="8" viewBox="0 0 16 8"><path d="M4.2 0.9H15.2L11.6 7.2H0.9Z" fill="none" stroke="#857a55" stroke-width="1.5"/></svg>
<div class="t" style="left:53.5px;top:371.55px;line-height:18.009999999999998px;font-size:12.01px;color:#3c3c3c;font-weight:normal;letter-spacing:-0.6px;">PRT_CSYS_DEF</div>
<svg style="position:absolute;left:31.5px;top:373.05px;" width="16" height="15" viewBox="0 0 16 15"><path d="M5 1V10.5H15M5 10.5L1 14" fill="none" stroke="#6a6a50" stroke-width="1.3"/><circle cx="5" cy="1.2" r="0.9" fill="#6a6a50"/><circle cx="15" cy="10.5" r="0.9" fill="#6a6a50"/><circle cx="1.2" cy="13.8" r="1" fill="#6a6a50"/></svg>
<div class="t" style="left:53.5px;top:392.30px;line-height:18px;font-size:12px;color:#3c3c3c;font-weight:normal;letter-spacing:0.5px;">拉伸 1</div>
<svg style="position:absolute;left:32px;top:392.8px;" width="17" height="17" viewBox="0 0 17 17"><path d="M0.8 5.5L5 1H16.2V11.5L11.8 16.2H0.8Z" fill="#f6f8fa" stroke="#a8b4bc" stroke-width="0.9"/><path d="M5 1H16.2L11.8 5.5H0.8Z" fill="#cdeaf6" stroke="#8ac0d8" stroke-width="0.8"/><path d="M11.8 5.5L16.2 1V11.5L11.8 16.2Z" fill="#5aaed8"/><path d="M0.8 5.5H11.8V16.2" fill="none" stroke="#a0b0b8" stroke-width="0.9"/></svg>
<svg style="position:absolute;left:17px;top:396.8px;" width="7" height="9" viewBox="0 0 7 9"><path d="M0 0L7 4.5L0 9Z" fill="#7a7a7a"/></svg>
<div class="t" style="left:53.5px;top:412.80px;line-height:18.5px;font-size:12.5px;color:#3c3c3c;font-weight:normal;">DTM1</div>
<svg style="position:absolute;left:31.5px;top:418.05px;" width="16" height="8" viewBox="0 0 16 8"><path d="M4.2 0.9H15.2L11.6 7.2H0.9Z" fill="none" stroke="#857a55" stroke-width="1.5"/></svg>
<div class="t" style="left:53.5px;top:433.80px;line-height:18px;font-size:12px;color:#3c3c3c;font-weight:normal;letter-spacing:0.5px;">拉伸 2</div>
<svg style="position:absolute;left:32px;top:434.3px;" width="17" height="17" viewBox="0 0 17 17"><path d="M0.8 5.5L5 1H16.2V11.5L11.8 16.2H0.8Z" fill="#f6f8fa" stroke="#a8b4bc" stroke-width="0.9"/><path d="M5 1H16.2L11.8 5.5H0.8Z" fill="#cdeaf6" stroke="#8ac0d8" stroke-width="0.8"/><path d="M11.8 5.5L16.2 1V11.5L11.8 16.2Z" fill="#5aaed8"/><path d="M0.8 5.5H11.8V16.2" fill="none" stroke="#a0b0b8" stroke-width="0.9"/></svg>
<svg style="position:absolute;left:17px;top:438.3px;" width="7" height="9" viewBox="0 0 7 9"><path d="M0 0L7 4.5L0 9Z" fill="#7a7a7a"/></svg>
<div class="t" style="left:53.5px;top:454.55px;line-height:18px;font-size:12px;color:#3c3c3c;font-weight:normal;letter-spacing:0.5px;">曲线 1</div>
<svg style="position:absolute;left:32px;top:458.55px;" width="16" height="10" viewBox="0 0 16 10"><path d="M1 8C2 2 5 1 7.5 5C10 9 13 8.5 15 2" fill="none" stroke="#6e6a45" stroke-width="1.5"/></svg>
<div class="t" style="left:53.5px;top:475.30px;line-height:18px;font-size:12px;color:#3c3c3c;font-weight:normal;letter-spacing:0.5px;">曲线 2</div>
<svg style="position:absolute;left:32px;top:479.3px;" width="16" height="10" viewBox="0 0 16 10"><path d="M1 8C2 2 5 1 7.5 5C10 9 13 8.5 15 2" fill="none" stroke="#6e6a45" stroke-width="1.5"/></svg>
<div class="t" style="left:53.5px;top:496.05px;line-height:18px;font-size:12px;color:#3c3c3c;font-weight:normal;letter-spacing:0.5px;">相交 1</div>
<svg style="position:absolute;left:32px;top:497.05px;" width="17" height="16" viewBox="0 0 17 16"><circle cx="5.5" cy="10.5" r="4.8" fill="none" stroke="#b8bcc0" stroke-width="1"/><path d="M6 1H16V11H10.5" fill="#f4f6f8" stroke="#9aa4aa" stroke-width="1"/><path d="M6 5.5C9 5.5 10.5 8 10.5 10.5H6Z" fill="#4aa8d8"/></svg>
<div class="t" style="left:53.5px;top:516.80px;line-height:18px;font-size:12px;color:#3c3c3c;font-weight:normal;letter-spacing:0.5px;">相交 2</div>
<svg style="position:absolute;left:32px;top:517.8px;" width="17" height="16" viewBox="0 0 17 16"><circle cx="5.5" cy="10.5" r="4.8" fill="none" stroke="#b8bcc0" stroke-width="1"/><path d="M6 1H16V11H10.5" fill="#f4f6f8" stroke="#9aa4aa" stroke-width="1"/><path d="M6 5.5C9 5.5 10.5 8 10.5 10.5H6Z" fill="#4aa8d8"/></svg>
<div class="t" style="left:53.5px;top:537.55px;line-height:18px;font-size:12px;color:#3c3c3c;font-weight:normal;letter-spacing:0.5px;">曲线 3</div>
<svg style="position:absolute;left:32px;top:541.55px;" width="16" height="10" viewBox="0 0 16 10"><path d="M1 8C2 2 5 1 7.5 5C10 9 13 8.5 15 2" fill="none" stroke="#6e6a45" stroke-width="1.5"/></svg>
<div class="t" style="left:53.5px;top:558.30px;line-height:18px;font-size:12px;color:#3c3c3c;font-weight:normal;letter-spacing:0.5px;">边界混合 1</div>
<svg style="position:absolute;left:32px;top:559.3px;" width="17" height="15" viewBox="0 0 17 15"><path d="M2.5 6C5 2 10 0.6 16 1.5C15 6 13.5 10.5 11.5 14C8 13 4.5 12.5 1 11C1 9 1.5 7.5 2.5 6Z" fill="#eef6fa" stroke="#7a9aaa" stroke-width="1"/><path d="M9 1.5C8 6 7.5 9 7 13M1.8 8.5C6 7.5 10 8 15 9" fill="none" stroke="#7a9aaa" stroke-width="0.9"/><path d="M9 1.5C12 1 14 1 16 1.5C15 6 13.5 10.5 11.5 14L7 13C7.5 9 8 6 9 1.5Z" fill="#b4e0f0" opacity="0.8"/></svg>
<div class="t" style="left:53.5px;top:579.05px;line-height:18px;font-size:12px;color:#3c3c3c;font-weight:normal;letter-spacing:0.5px;">合并 1</div>
<svg style="position:absolute;left:32px;top:579.55px;" width="17" height="17" viewBox="0 0 17 17"><path d="M6 1H16V11.5H11" fill="#f6f8fa" stroke="#4a8aa0" stroke-width="1.2"/><path d="M6 1V6" stroke="#4a8aa0" stroke-width="1.2"/><circle cx="6" cy="11" r="5" fill="none" stroke="#4a8aa0" stroke-width="1.3"/><path d="M6 6V11H11" fill="none" stroke="#b0c0c8" stroke-width="0.9"/></svg>
<div class="t" style="left:53.5px;top:599.80px;line-height:18px;font-size:12px;color:#3c3c3c;font-weight:normal;letter-spacing:0.5px;">拉伸 3</div>
<svg style="position:absolute;left:32px;top:600.3px;" width="17" height="17" viewBox="0 0 17 17"><path d="M0.8 5.5L5 1H16.2V11.5L11.8 16.2H0.8Z" fill="#f6f8fa" stroke="#a8b4bc" stroke-width="0.9"/><path d="M5 1H16.2L11.8 5.5H0.8Z" fill="#cdeaf6" stroke="#8ac0d8" stroke-width="0.8"/><path d="M11.8 5.5L16.2 1V11.5L11.8 16.2Z" fill="#5aaed8"/><path d="M0.8 5.5H11.8V16.2" fill="none" stroke="#a0b0b8" stroke-width="0.9"/></svg>
<svg style="position:absolute;left:17px;top:604.3px;" width="7" height="9" viewBox="0 0 7 9"><path d="M0 0L7 4.5L0 9Z" fill="#7a7a7a"/></svg>
<div class="t" style="left:53.5px;top:620.55px;line-height:18px;font-size:12px;color:#3c3c3c;font-weight:normal;letter-spacing:0.5px;">合并 2</div>
<svg style="position:absolute;left:32px;top:621.05px;" width="17" height="17" viewBox="0 0 17 17"><path d="M6 1H16V11.5H11" fill="#f6f8fa" stroke="#4a8aa0" stroke-width="1.2"/><path d="M6 1V6" stroke="#4a8aa0" stroke-width="1.2"/><circle cx="6" cy="11" r="5" fill="none" stroke="#4a8aa0" stroke-width="1.3"/><path d="M6 6V11H11" fill="none" stroke="#b0c0c8" stroke-width="0.9"/></svg>
<div class="t" style="left:53.5px;top:641.30px;line-height:18px;font-size:12px;color:#3c3c3c;font-weight:normal;letter-spacing:0.5px;">镜像 1</div>
<svg style="position:absolute;left:32px;top:642.3px;" width="17" height="16" viewBox="0 0 17 16"><path d="M6 1C2.5 1 1 3 1 5V15H6Z" fill="#f0eef6" stroke="#8a80a8" stroke-width="1.1"/><path d="M11 1C14.5 1 16 3 16 5V15H11Z" fill="#f0eef6" stroke="#8a80a8" stroke-width="1.1"/><path d="M8.5 0V16" stroke="#b0a8c8" stroke-width="0.8"/></svg>
<div style="position:absolute;left:223px;top:172px;width:1109px;height:511px;background:#e5e9ec"></div>
<div style="position:absolute;left:223px;top:172px;width:1109px;height:511px;overflow:hidden"><svg style="position:absolute;left:-223px;top:-172px" width="1332" height="716" viewBox="0 0 1332 716"><defs><radialGradient id="gL" gradientUnits="userSpaceOnUse" cx="318" cy="325" r="150" fx="318" fy="325"><stop offset="0" stop-color="#6f7abd"/><stop offset="0.55" stop-color="#8591da"/><stop offset="1" stop-color="#97a4ec"/></radialGradient><linearGradient id="gL2" x1="0" y1="0" x2="0" y2="1"><stop offset="0" stop-color="#7d89d2"/><stop offset="1" stop-color="#93a0ea"/></linearGradient><linearGradient id="gM" x1="0" y1="0" x2="0" y2="1"><stop offset="0" stop-color="#8e9ae2"/><stop offset="1" stop-color="#97a3ec"/></linearGradient></defs><path d="M223 309.1L959.3 316.4L943.3 486.4L223 478.5Z" fill="#d4c8d2" fill-opacity="0.24"/><path d="M223 312.1L893.5 318L1014.9 433.3L223 425.3Z" fill="#d2c4cf" fill-opacity="0.4"/><path d="M439.1 255L560.8 368.8L545.4 539.5L423.7 425Z" fill="#dcdcdf" fill-opacity="0.25"/><path d="M746.9 258L869.6 372.6L853.4 542.7L731.6 428.8Z" fill="#dcdcdf" fill-opacity="0.25"/><path d="M289.3 305.8L297.4 318.2L385 416.5L375.3 530.8L278.7 419.5L280.7 387Z" fill="#909be2"/><path d="M280.7 387L330 390L327 475L278.7 419.5Z" fill="#8a94d8"/><path d="M223 306.1C235 308 250 311.5 282 318.4L289.3 305.8L297.4 318.2C305 322 312 326 319.8 332.1C327 338 333 345 337.9 351.7C345 361 350 368 353.3 372.6C357 379 359 384 361.7 389.4L363.7 392.2L280.7 385.9L223 383.8Z" fill="url(#gL)"/><path d="M583.8 311.4L597 321L695 398L723 420.6L714 534L573.5 421.8Z" fill="#939ee6"/><path d="M597 321L672 317.2C685 316 690 313.4 714 311C730 309.5 744 308.6 774 307.2L932 307.5C950 310 962 326 972.5 355.3C977 368 980 380 982.7 391L835 390.5C780 392 740 394 700 397C660 400 620 403 590 405L583 400Z" fill="url(#gM)"/><path d="M583.8 311.4L597 321L636 358L653 368L651 478L573.5 421.8Z" fill="#8790d2" fill-opacity="0.55"/><path d="M223 309.1L959.3 316.4L943.3 486.4L223 478.3" fill="none" stroke="#8a7073" stroke-width="1"/><path d="M223 312.1L893.5 318L1014.9 433.3L223 425.3" fill="none" stroke="#8a7073" stroke-width="1"/><path d="M439.1 255L560.8 368.8L545.4 539.5L423.7 425Z" fill="none" stroke="#6c6466" stroke-width="1"/><path d="M746.9 258L869.6 372.6L853.4 542.7L731.6 428.8Z" fill="none" stroke="#6c6466" stroke-width="1"/><path d="M444.6 323.7L600 321.4" fill="none" stroke="#3f74d6" stroke-width="1.4"/><path d="M352 370.3C368.3 370.3 415.2 370.3 450 370.2C484.8 370.1 534.0 370.7 561 369.5C588.0 368.3 597.2 365.5 612 362.9C626.8 360.3 635.3 357.8 650 354C664.7 350.2 684.9 344.1 700 340C715.1 335.9 726.2 332.6 740.5 329.6C754.8 326.6 767.8 323.2 786 321.8C804.2 320.4 822.1 321.1 850 321.2C877.9 321.3 936.2 322.0 953.4 322.2" fill="none" stroke="#3f74d6" stroke-width="1.4"/><path d="M531.5 406.7C536.2 406.6 545.2 406.6 560 405.8C574.8 405.0 596.9 403.2 620 401.8C643.1 400.4 675.4 399.2 698.7 397.7C722.0 396.2 743.1 394.2 760 393C776.9 391.8 787.3 391.2 800 390.7C812.7 390.2 830.0 390.3 836 390.2" fill="none" stroke="#3f74d6" stroke-width="1.4"/><path d="M495.5 370.6L496 352" stroke="#60d050" stroke-width="1.1"/><path d="M494.6 357L496 350L497.4 357Z" fill="#60d050"/><path d="M495.5 370.6L513 371" stroke="#e04848" stroke-width="1.1"/><path d="M507 369.6L514 371L507 372.4Z" fill="#e04848"/><path d="M495.5 370.6L503 378" stroke="#50d8d0" stroke-width="1.2"/><path d="M500 342L502 346L504 342M502 346V349" fill="none" stroke="#62c866" stroke-width="0.9"/><path d="M517 373L522 380M522 373L517 380" fill="none" stroke="#e05050" stroke-width="1"/><path d="M503 381H508L503 386H508" fill="none" stroke="#5ad8d0" stroke-width="0.9"/></svg></div>
<div class="t" style="left:416.5px;top:367.95px;line-height:16.5px;font-size:10.5px;color:#858385;font-weight:normal;letter-spacing:-0.5px;">PRT_CSYS_DEF</div>
<div class="t" style="left:545.5px;top:528.80px;line-height:16px;font-size:10px;color:#767274;font-weight:normal;">RIGHT</div>
<div class="t" style="left:853.2px;top:532.50px;line-height:16px;font-size:10px;color:#767274;font-weight:normal;">DTM1</div>
<div class="t" style="left:893px;top:307.45px;line-height:15.5px;font-size:9.5px;color:#8a7a86;font-weight:normal;">TOP</div>
<svg style="position:absolute;left:646px;top:510px;" width="14" height="20" viewBox="0 0 14 20"><path d="M0.5 0.5V16L4.5 12.5L7.5 19L10 18L7 11.5H12Z" fill="#fff" stroke="#222" stroke-width="1"/></svg>
<div style="position:absolute;left:564px;top:177px;width:428px;height:31px;background:#f3f6f8;border:1px solid #c3c9cc;box-sizing:border-box"></div>
<div style="position:absolute;left:858px;top:181px;width:24px;height:24px;background:#dde1e3;border:1px solid #c8cccf;box-sizing:border-box"></div>
<svg style="position:absolute;left:572px;top:185px;" width="17" height="16" viewBox="0 0 17 16"><rect x="0.6" y="0.6" width="14.5" height="14.5" fill="#f6f8f8" stroke="#a8acae" stroke-width="1.1"/><circle cx="7" cy="7" r="4.5" fill="#e6f6f6" stroke="#7a9aa0" stroke-width="1.3"/><path d="M10.2 10.2L14.5 14.5" stroke="#8a8e90" stroke-width="2"/></svg>
<svg style="position:absolute;left:598px;top:184.5px;" width="17" height="17" viewBox="0 0 17 17"><path d="M10.5 10.5L15.5 15.5" stroke="#9a9ea0" stroke-width="2.6"/><path d="M10.5 10.5L15.5 15.5" stroke="#f0f0f0" stroke-width="1"/><circle cx="6.5" cy="6.5" r="5.6" fill="#e4f4f8" stroke="#5a8a96" stroke-width="1.4"/><path d="M6.5 3.5V9.5M3.5 6.5H9.5" stroke="#1a4a6a" stroke-width="2"/></svg>
<svg style="position:absolute;left:624px;top:184.5px;" width="17" height="17" viewBox="0 0 17 17"><path d="M10.5 10.5L15.5 15.5" stroke="#9a9ea0" stroke-width="2.6"/><path d="M10.5 10.5L15.5 15.5" stroke="#f0f0f0" stroke-width="1"/><circle cx="6.5" cy="6.5" r="5.6" fill="#e4f4f8" stroke="#5a8a96" stroke-width="1.4"/><path d="M3.5 6.5H9.5" stroke="#1a4a6a" stroke-width="2"/></svg>
<svg style="position:absolute;left:651px;top:185.5px;" width="16.5" height="15.5" viewBox="0 0 16.5 15.5"><defs><linearGradient id="rpg" x1="0" y1="0" x2="1" y2="1"><stop offset="0.3" stop-color="#ffffff"/><stop offset="0.7" stop-color="#9ad0e0"/></linearGradient></defs><rect x="0.6" y="0.6" width="15.3" height="14.3" fill="url(#rpg)" stroke="#a8b8bc" stroke-width="1.1"/><path d="M3 14L14 3" stroke="#1a3a5a" stroke-width="1.6"/></svg>
<svg style="position:absolute;left:677px;top:184.5px;" width="18" height="17" viewBox="0 0 18 17"><defs><radialGradient id="rsg" cx="0.35" cy="0.4" r="0.7"><stop offset="0" stop-color="#ffffff"/><stop offset="1" stop-color="#555"/></radialGradient></defs><path d="M1 12C1 7 5 6 8 8C9 4 12 3 14 1C15 5 15 9 13 12C10 15 5 16 1 12Z" fill="url(#rsg)"/><path d="M18 17L14.5 17L18 13.5Z" fill="#333"/></svg>
<svg style="position:absolute;left:703px;top:184px;" width="18" height="18" viewBox="0 0 18 18"><path d="M0.8 3.5L3.5 0.8H15V12.5L12.3 15.2H0.8Z" fill="#f8fbfc" stroke="#a8c8d4" stroke-width="0.9"/><path d="M12.3 3.5L15 0.8V12.5L12.3 15.2Z" fill="#6ab4d8"/><path d="M0.8 3.5H12.3V15.2" fill="none" stroke="#a8c8d4" stroke-width="0.9"/><path d="M18 17.5L14.5 17.5L18 14.0Z" fill="#333"/></svg>
<svg style="position:absolute;left:730px;top:184px;" width="19" height="18" viewBox="0 0 19 18"><path d="M1 5L6 1H12L16 5V11L12 15H6L1 11Z" fill="#d4eef8" stroke="#5a9ab8" stroke-width="1.1"/><path d="M1 5L8 8L16 5M8 8V15" fill="none" stroke="#5a9ab8" stroke-width="0.9"/><path d="M8 8L12 1L16 5Z" fill="#6ab0d8"/><rect x="10" y="10" width="5.5" height="6.5" fill="#f4f4f4" stroke="#666" stroke-width="0.8"/><path d="M12.7 12V12.8M12.7 14V14.8" stroke="#333"/><path d="M19 17.5L15.5 17.5L19 14.0Z" fill="#333"/></svg>
<svg style="position:absolute;left:756px;top:184.5px;" width="17" height="17" viewBox="0 0 17 17"><rect x="0.6" y="0.6" width="11" height="14" fill="#f8f8f8" stroke="#9a9a9a" stroke-width="1"/><path d="M0.6 4H11.6M0.6 7.5H11.6M0.6 11H11.6M4 0.6V15" stroke="#b8b8b8" stroke-width="0.8"/><path d="M6 10H9L10 8.5H13L14 10H16.5V16.5H6Z" fill="#2a2a2a"/><circle cx="11.3" cy="13" r="2.2" fill="#888" stroke="#eee" stroke-width="0.7"/></svg>
<svg style="position:absolute;left:782.5px;top:184.5px;" width="17" height="17" viewBox="0 0 17 17"><path d="M1 4L4.5 1H16V12L12.5 15.5H1Z" fill="#cdeaf4" stroke="#5a9ab4" stroke-width="1.1"/><path d="M1 4H12.5V15.5M12.5 4L16 1" fill="none" stroke="#5a9ab4" stroke-width="1"/><path d="M3 13L10 7M4 8L11 13" stroke="#7ab8d0" stroke-width="0.9"/></svg>
<svg style="position:absolute;left:809px;top:184.5px;" width="18" height="17.5" viewBox="0 0 18 17.5"><path d="M0.8 3.5L3.5 0.8H15V12.5L12.3 15.2H0.8Z" fill="#eef6f8" stroke="#b8d0d8" stroke-width="0.9"/><path d="M0.8 3.5L3.5 0.8H15L12.3 3.5Z" fill="#c4e8f0"/><path d="M1 15.5L15.5 1" stroke="#2a4a5a" stroke-width="1.4"/><path d="M18 17.5L14.5 17.5L18 14.0Z" fill="#333"/></svg>
<svg style="position:absolute;left:834px;top:184.5px;" width="20" height="18" viewBox="0 0 20 18"><path d="M1 1L4 4M4 1L1 4" stroke="#444" stroke-width="1.1"/><path d="M8 0.5L6.5 4M6 6L4.5 9.5M4 11.5L2.5 15" stroke="#7a7040" stroke-width="1.5"/><path d="M9 7V12H15M9 12L6 15.5" fill="none" stroke="#333" stroke-width="1.1"/><path d="M14 10.5L16 12L14 13.5Z M7.7 8L9 6L10.3 8Z" fill="#333"/><path d="M20 18L16.5 18L20 14.5Z" fill="#333"/></svg>
<svg style="position:absolute;left:861.5px;top:184.5px;" width="18" height="17" viewBox="0 0 18 17"><rect x="0.6" y="0.6" width="9.5" height="6.5" fill="#fbf6e6" stroke="#555" stroke-width="0.9"/><path d="M10 4H15V9" fill="none" stroke="#333" stroke-width="1.4"/><path d="M12.5 8.5L15 11.5L17.5 8.5Z" fill="#333"/><path d="M7 14C9 11 15 11 17 14C15 17 9 17 7 14Z" fill="#222"/><circle cx="12" cy="14" r="1.5" fill="#eee"/></svg>
<svg style="position:absolute;left:888px;top:185px;" width="17" height="17" viewBox="0 0 17 17"><path d="M4 3L9 8.5L14.5 8.5M9 8.5L3.5 13.5" fill="none" stroke="#4a5a66" stroke-width="1.4"/><circle cx="4" cy="3" r="2.6" fill="#6aa060" stroke="#4a7a40" stroke-width="0.6"/><circle cx="14.5" cy="8.5" r="2.6" fill="#e08a8a" stroke="#b06060" stroke-width="0.6"/><circle cx="3.5" cy="13.8" r="2.6" fill="#3a8ac8" stroke="#2a6aa0" stroke-width="0.6"/></svg>
<svg style="position:absolute;left:914.5px;top:184.5px;" width="17.5" height="16" viewBox="0 0 17.5 16"><path d="M8.5 1.5L16 14.5H1Z" fill="none" stroke="#a8acae" stroke-width="2"/><path d="M8.5 6.5L12 12.5H5Z" fill="none" stroke="#c0c4c6" stroke-width="1"/><path d="M13 10.5L17 13L13 15.5Z" fill="#f0f0f0" stroke="#a8acae" stroke-width="0.8"/></svg>
<svg style="position:absolute;left:942.5px;top:186.5px;" width="12.5" height="12" viewBox="0 0 12.5 12"><rect x="0.5" y="0.5" width="4" height="11" fill="#9ea2a4"/><rect x="7.7" y="0.5" width="4" height="11" fill="#9ea2a4"/></svg>
<svg style="position:absolute;left:967px;top:186.5px;" width="17" height="11.5" viewBox="0 0 17 11.5"><defs><linearGradient id="lgg" x1="0" y1="0" x2="1" y2="0"><stop offset="0" stop-color="#e8e8e8"/><stop offset="0.5" stop-color="#b8b8b8"/><stop offset="1" stop-color="#d8d8d8"/></linearGradient></defs><path d="M0.5 0.5H16.5V11H5V6C5 4 3 3.5 0.5 3.5Z" fill="url(#lgg)"/></svg>
<div style="position:absolute;left:0px;top:683px;width:1332px;height:33px;background:#f3f6f8"></div>
<div style="position:absolute;left:0px;top:682px;width:1332px;height:1.5px;background:#d3d9dc"></div>
<div style="position:absolute;left:90px;top:688px;width:1px;height:24px;background:#cfd3d5"></div>
<div style="position:absolute;left:982px;top:686px;width:1px;height:27px;background:#cfd3d5"></div>
<div style="position:absolute;left:986.5px;top:686px;width:1px;height:27px;background:#cfd3d5"></div>
<div style="position:absolute;left:1035px;top:686px;width:1px;height:27px;background:#cfd3d5"></div>
<div style="position:absolute;left:989px;top:688px;width:44px;height:25px;background:#f8f9f9;border:1px solid #c8cccf;box-sizing:border-box"></div>
<div style="position:absolute;left:1018px;top:689px;width:1px;height:23px;background:#d5d9db"></div>
<svg style="position:absolute;left:1021.9000000000001px;top:698.3px;" width="7" height="4" viewBox="0 0 7 4"><path d="M0 0H7L3.5 4Z" fill="#555"/></svg>
<div style="position:absolute;left:1134px;top:689px;width:179px;height:24px;background:#f7f7f7;border:1px solid #c0c4c6;box-sizing:border-box"></div>
<div style="position:absolute;left:1297px;top:690px;width:1px;height:22px;background:#d0d3d5"></div>
<div class="t" style="left:1142px;top:691.70px;line-height:18px;font-size:12px;color:#3c3c3c;font-weight:normal;letter-spacing:0.5px;">几何</div>
<svg style="position:absolute;left:1300.6px;top:698.5px;" width="8" height="4" viewBox="0 0 8 4"><path d="M0 0H8L4.0 4Z" fill="#555"/></svg>
<svg style="position:absolute;left:10.5px;top:177px;" width="15" height="20" viewBox="0 0 15 20"><rect x="0.9" y="0.9" width="4.4" height="4.4" fill="none" stroke="#505050" stroke-width="1.3"/><rect x="0.9" y="7.6" width="4.4" height="4.4" fill="none" stroke="#505050" stroke-width="1.3"/><rect x="0.9" y="14.5" width="4.4" height="4.4" fill="none" stroke="#505050" stroke-width="1.3"/><rect x="9.5" y="7.6" width="4.4" height="4.4" fill="none" stroke="#505050" stroke-width="1.3"/><path d="M5.5 9.8H9.5" stroke="#505050" stroke-width="0.8"/></svg>
<svg style="position:absolute;left:86px;top:178px;" width="20" height="20" viewBox="0 0 20 20"><path d="M0.5 2.5Q0.5 0.5 2.5 0.5H5.5L7.0 2.0H10.5V9.0H0.5Z" fill="#f2e0a8" stroke="#c8b070" stroke-width="0.8"/><rect x="0.5" y="3.0" width="10.5" height="6.5" fill="#fbf0c8" stroke="#c8b070" stroke-width="0.8"/><path d="M3.5 7Q3.5 5 5.5 5H8.5L10.0 6.5H13.5V13.5H3.5Z" fill="#f2e0a8" stroke="#c8b070" stroke-width="0.8"/><rect x="3.5" y="7.5" width="10.5" height="6.5" fill="#fbf0c8" stroke="#c8b070" stroke-width="0.8"/><path d="M8 11.8Q8 9.8 10 9.8H13L14.5 11.3H18V18.3H8Z" fill="#f2e0a8" stroke="#c8b070" stroke-width="0.8"/><rect x="8" y="12.3" width="10.5" height="6.5" fill="#fbf0c8" stroke="#c8b070" stroke-width="0.8"/></svg>
<svg style="position:absolute;left:158.5px;top:179.5px;" width="18" height="17" viewBox="0 0 18 17"><path d="M0.8 3Q0.8 0.8 3 0.8H7L9 2.8H16.5V15.5H0.8Z" fill="#efd898" stroke="#c0a468" stroke-width="0.9"/><rect x="0.8" y="4" width="16" height="11.8" fill="#fdf6dc" stroke="#c0a468" stroke-width="0.9"/><path d="M8.8 6.5L10 9L12.5 10L10 11L8.8 13.5L7.6 11L5 10L7.6 9Z" fill="#2a8ab8"/></svg>
<svg style="position:absolute;left:134px;top:181px;" width="6" height="12" viewBox="0 0 6 12"><path d="M1 2H5M1 6H5M1 10H5" stroke="#c8cccc" stroke-width="0.8"/></svg>
<svg style="position:absolute;left:206px;top:181px;" width="6" height="12" viewBox="0 0 6 12"><path d="M1 2H5M1 6H5M1 10H5" stroke="#c8cccc" stroke-width="0.8"/></svg>
<svg style="position:absolute;left:99px;top:207px;" width="18" height="21" viewBox="0 0 18 21"><path d="M0.5 2.5Q4 0 9 0.8V4.5H0.5Z" fill="#6a6a6a"/><rect x="3.2" y="4" width="4.6" height="16.5" rx="1" fill="#dcc080" stroke="#a88a50" stroke-width="0.7"/><rect x="13" y="0.5" width="1.6" height="8" fill="#888"/><rect x="11.6" y="8" width="4.4" height="12.5" rx="1.5" fill="#e8c870" stroke="#a88a50" stroke-width="0.7"/></svg>
<svg style="position:absolute;left:144px;top:207px;" width="17" height="21" viewBox="0 0 17 21"><path d="M0.7 0.7H11L16.3 6V20.3H0.7Z" fill="#fafafa" stroke="#8a8a8a" stroke-width="1"/><path d="M11 0.7V6H16.3" fill="none" stroke="#8a8a8a" stroke-width="0.9"/><circle cx="4" cy="7.5" r="1" fill="#666"/><circle cx="4" cy="11.5" r="1" fill="#666"/><circle cx="4" cy="15.5" r="1" fill="#666"/><path d="M6.5 7.5H13M6.5 11.5H13M6.5 15.5H13" stroke="#555" stroke-width="1.3"/></svg>
<svg style="position:absolute;left:190px;top:207px;" width="22" height="21" viewBox="0 0 22 21"><rect x="0.7" y="0.7" width="3" height="3" fill="none" stroke="#c4c8ca" stroke-width="0.9"/><rect x="0.7" y="7.7" width="3" height="3" fill="none" stroke="#c4c8ca" stroke-width="0.9"/><rect x="0.7" y="14.7" width="3" height="3" fill="none" stroke="#c4c8ca" stroke-width="0.9"/><path d="M6.5 1V19M6.5 2H10M6.5 9H10" stroke="#d0d4d6" stroke-width="0.9"/><path d="M8 14C10 11 15 10 19 14C15 18 10 17 8 14Z" fill="none" stroke="#b4b8ba" stroke-width="1.2"/><path d="M9 9.5L20 20" stroke="#b0b4b6" stroke-width="1.2"/></svg>
<svg style="position:absolute;left:12px;top:238.5px;" width="17" height="15" viewBox="0 0 17 15"><path d="M0.8 0.8H16.2L10 7.5V14.2H7V7.5Z" fill="none" stroke="#7a7a7a" stroke-width="1.2"/></svg>
<svg style="position:absolute;left:6px;top:688px;" width="22" height="25" viewBox="0 0 22 25"><rect x="0.5" y="0.5" width="21.5" height="24" fill="#e2e5e7" stroke="#ccd0d2"/><rect x="3.3" y="4.3" width="15.8" height="16" fill="#f8f8f8" stroke="#8a8e90" stroke-width="1.1"/><rect x="3.3" y="4.3" width="15.8" height="2.5" fill="#ffffff" stroke="#8a8e90" stroke-width="1"/><rect x="3.6" y="8" width="4" height="12" fill="#cfe8e2" stroke="#5a8a80" stroke-width="0.9"/><path d="M11 18.5C13 15.5 18.5 15.5 20.5 18.5C18.5 21.5 13 21.5 11 18.5Z" fill="#333"/><circle cx="15.7" cy="18.5" r="1.4" fill="#ddd"/></svg>
<svg style="position:absolute;left:34.5px;top:691px;" width="19" height="19" viewBox="0 0 19 19"><defs><radialGradient id="glb" cx="0.6" cy="0.4" r="0.7"><stop offset="0" stop-color="#b8ecfa"/><stop offset="1" stop-color="#1a80b8"/></radialGradient></defs><circle cx="9.8" cy="9.7" r="6.8" fill="url(#glb)"/><ellipse cx="9.8" cy="9.7" rx="10" ry="3.6" transform="rotate(-45 9.8 9.7)" fill="none" stroke="#4a5a66" stroke-width="1.3"/></svg>
<svg style="position:absolute;left:61.5px;top:692px;" width="17.5" height="17.5" viewBox="0 0 17.5 17.5"><defs><linearGradient id="sqg" x1="0" y1="0" x2="0" y2="1"><stop offset="0" stop-color="#ffffff"/><stop offset="1" stop-color="#d8e8ee"/></linearGradient></defs><rect x="0.8" y="0.8" width="16" height="16" rx="1.5" fill="url(#sqg)" stroke="#6a7a80" stroke-width="1.2"/></svg>
<svg style="position:absolute;left:995px;top:693px;" width="18" height="16" viewBox="0 0 18 16"><rect x="3" y="0.5" width="4" height="4" fill="#3a3a3a"/><rect x="10.5" y="0.5" width="4" height="4" fill="#3a3a3a"/><path d="M0.5 15.5L2 5H8.5V15.5Z" fill="#6a6a6a"/><path d="M17.5 15.5L16 5H9.5V15.5Z" fill="#6a6a6a"/><rect x="7" y="5" width="4" height="8" fill="#222"/><path d="M2.5 6V14M15.5 6V14" stroke="#9a9a9a" stroke-width="1.4"/><rect x="0.5" y="13" width="4.5" height="2.5" fill="#222"/><rect x="13" y="13" width="4.5" height="2.5" fill="#222"/></svg>
</body></html>
